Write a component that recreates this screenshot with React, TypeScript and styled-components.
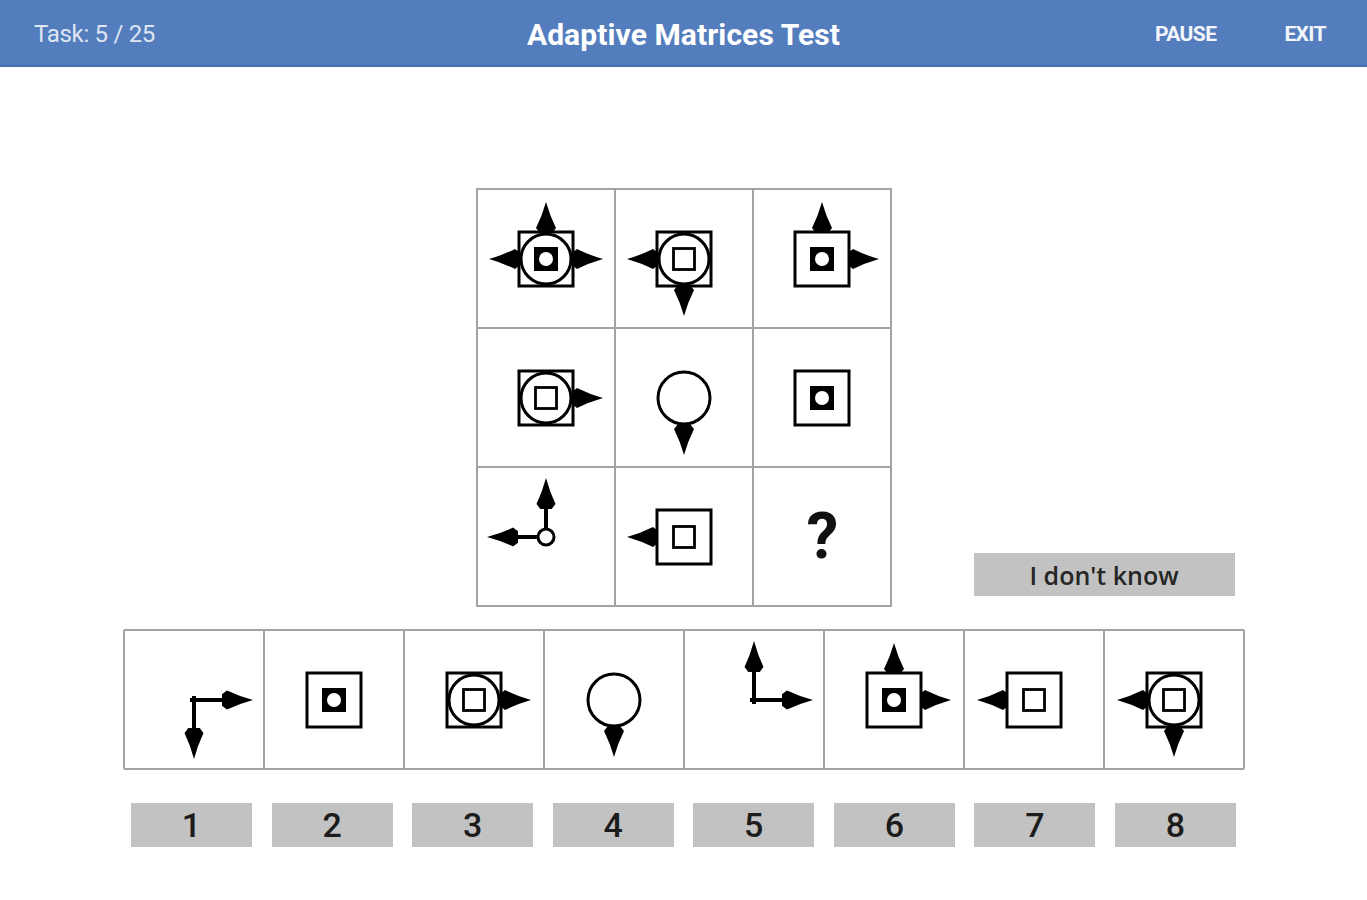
import styled, { createGlobalStyle } from "styled-components";

type Dir = "up" | "down" | "left" | "right";

interface Fig {
  square?: boolean;
  ring?: boolean;
  core?: "dot" | "box";
  ball?: boolean;
  knob?: boolean;
  spikes?: Dir[];
  rays?: Dir[];
}

const turn: Record<Dir, number> = { up: 0, right: 90, down: 180, left: 270 };

// arrow head pointing up, its neck sitting on the edge of the square
const HEAD = "M -6 -26 L -10 -31 Q -4 -43 0 -57 Q 4 -43 10 -31 L 6 -26 Z";

const matrix: (Fig | null)[] = [
  { square: true, ring: true, core: "dot", spikes: ["up", "left", "right"] },
  { square: true, ring: true, core: "box", spikes: ["left", "down"] },
  { square: true, core: "dot", spikes: ["up", "right"] },
  { square: true, ring: true, core: "box", spikes: ["right"] },
  { ball: true, spikes: ["down"] },
  { square: true, core: "dot" },
  { knob: true, rays: ["up", "left"] },
  { square: true, core: "box", spikes: ["left"] },
  null,
];

const answers: Fig[] = [
  { rays: ["right", "down"] },
  { square: true, core: "dot" },
  { square: true, ring: true, core: "box", spikes: ["right"] },
  { ball: true, spikes: ["down"] },
  { rays: ["up", "right"] },
  { square: true, core: "dot", spikes: ["up", "right"] },
  { square: true, core: "box", spikes: ["left"] },
  { square: true, ring: true, core: "box", spikes: ["left", "down"] },
];

function Figure({ fig }: { fig: Fig }) {
  return (
    <svg width="120" height="120" viewBox="-60 -60 120 120">
      {fig.rays?.map((d) => (
        <g key={"r" + d} transform={`rotate(${turn[d]})`}>
          <line x1="0" y1="2" x2="0" y2="-30" stroke="#000" strokeWidth="4" strokeLinecap="square" />
          <path d={HEAD} fill="#000" transform="translate(0 -2) scale(0.95 1)" />
        </g>
      ))}
      {fig.spikes?.map((d) => (
        <path key={"s" + d} d={HEAD} fill="#000" transform={`rotate(${turn[d]})`} />
      ))}
      {fig.square && (
        <rect x="-27" y="-27" width="54" height="54" fill="#fff" stroke="#000" strokeWidth="3" />
      )}
      {fig.ring && <circle r="25" fill="none" stroke="#000" strokeWidth="3" />}
      {fig.ball && <circle r="26" fill="#fff" stroke="#000" strokeWidth="3" />}
      {fig.core === "dot" && (
        <>
          <rect x="-12" y="-12" width="24" height="24" fill="#000" />
          <circle r="7" fill="#fff" />
        </>
      )}
      {fig.core === "box" && (
        <rect x="-10.5" y="-10.5" width="21" height="21" fill="none" stroke="#000" strokeWidth="2.8" />
      )}
      {fig.knob && <circle r="8" fill="#fff" stroke="#000" strokeWidth="3" />}
    </svg>
  );
}

export default function App() {
  return (
    <>
      <GlobalStyle />
      <Header>
        <Task>Task: 5 / 25</Task>
        <Title>Adaptive Matrices Test</Title>
        <Nav>
          <NavButton>PAUSE</NavButton>
          <NavButton>EXIT</NavButton>
        </Nav>
      </Header>

      <Main>
        <PuzzleRow>
          <Matrix>
            {matrix.map((fig, i) => (
              <Cell key={i}>{fig ? <Figure fig={fig} /> : <Question>?</Question>}</Cell>
            ))}
          </Matrix>
          <DontKnow>I don't know</DontKnow>
        </PuzzleRow>

        <Answers>
          {answers.map((fig, i) => (
            <AnswerCell key={i}>
              <Figure fig={fig} />
            </AnswerCell>
          ))}
        </Answers>

        <Numbers>
          {answers.map((_, i) => (
            <NumberButton key={i}>{i + 1}</NumberButton>
          ))}
        </Numbers>
      </Main>
    </>
  );
}

const GlobalStyle = createGlobalStyle`
  body {
    margin: 0;
    background: #fff;
    font-family: Roboto, "Liberation Sans", sans-serif;
  }
`;

const Header = styled.header`
  height: 67px;
  box-sizing: border-box;
  background: #547dbe;
  border-bottom: 2px solid #4571b4;
  display: grid;
  grid-template-columns: 1fr auto 1fr;
  align-items: center;
  padding: 3px 34px 0;
  color: #fff;
`;

const Task = styled.div`
  font-size: 24px;
  letter-spacing: -0.3px;
  color: #dfe6f2;
`;

const Title = styled.h1`
  margin: 0;
  font-size: 30px;
  font-weight: 700;
  letter-spacing: 0.1px;
`;

const Nav = styled.nav`
  justify-self: end;
  display: flex;
  gap: 68px;
  margin-right: 7px;
`;

const NavButton = styled.span`
  font-size: 21px;
  font-weight: 700;
  letter-spacing: -0.6px;
  color: #f4f6fb;
`;

const Main = styled.main`
  padding-top: 121px;
`;

const PuzzleRow = styled.div`
  display: grid;
  grid-template-columns: 1fr auto 1fr;
  align-items: end;
`;

const Matrix = styled.div`
  grid-column: 2;
  display: grid;
  grid-template-columns: repeat(3, 136px);
  grid-auto-rows: 137px;
  gap: 2px;
  padding: 2px;
  background: #a3a3a3;
`;

const Cell = styled.div`
  background: #fff;
  display: flex;
  align-items: center;
  justify-content: center;
`;

const Question = styled.span`
  font-size: 64px;
  font-weight: 700;
  color: #111;
  line-height: 1;
  margin-left: 2px;
`;

const DontKnow = styled.button`
  grid-column: 3;
  justify-self: start;
  width: 261px;
  height: 43px;
  margin: 0 0 11px 82px;
  border: none;
  background: #c2c2c2;
  font-family: "Open Sans", sans-serif;
  font-size: 25px;
  font-weight: 600;
  color: #262626;
  padding: 0;
`;

const Answers = styled.div`
  width: 1122px;
  margin: 22px auto 0;
  box-sizing: border-box;
  display: grid;
  grid-template-columns: repeat(8, 1fr);
  grid-auto-rows: 137px;
  gap: 2px;
  padding: 2px;
  background: #a3a3a3;
  border-radius: 2px;
`;

const AnswerCell = styled.div`
  background: #fff;
  display: flex;
  align-items: center;
  justify-content: center;
`;

const Numbers = styled.div`
  width: 1105px;
  margin: 33px auto 0;
  display: flex;
  justify-content: space-between;
`;

const NumberButton = styled.button`
  width: 121px;
  height: 44px;
  border: none;
  padding: 0;
  background: #c2c2c2;
  font-family: Roboto, sans-serif;
  font-size: 34px;
  font-weight: 500;
  color: #1c1c1c;
`;
